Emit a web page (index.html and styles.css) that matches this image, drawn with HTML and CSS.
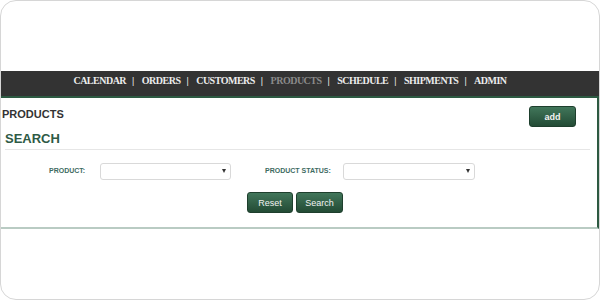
FILE: index.html
```html
<!DOCTYPE html>
<html>
	<head>
		<meta charset="UTF-8">
		<title>Products</title>
		<link rel="stylesheet" href="styles.css">
	</head>
	<body>
		<div class="frame">
			<div class="nav">
				<a href="javascript:;">CALENDAR</a><span class="sep">|</span><a href="javascript:;">ORDERS</a><span class="sep">|</span><a href="javascript:;">CUSTOMERS</a><span class="sep">|</span><a href="javascript:;" class="current">PRODUCTS</a><span class="sep">|</span><a href="javascript:;">SCHEDULE</a><span class="sep">|</span><a href="javascript:;">SHIPMENTS</a><span class="sep">|</span><a href="javascript:;">ADMIN</a>
			</div>
			<div class="panel">
				<div class="titlebar">
					<h1>PRODUCTS</h1>
					<button class="btn btn-add">add</button>
				</div>
				<h2 class="search-title">SEARCH</h2>
				<div class="search-row">
					<label class="lbl lbl-product">PRODUCT:</label>
					<div class="select sel-product"><select></select></div>
					<label class="lbl lbl-status">PRODUCT STATUS:</label>
					<div class="select sel-status"><select></select></div>
				</div>
				<div class="actions">
					<button class="btn btn-reset">Reset</button>
					<button class="btn btn-search">Search</button>
				</div>
			</div>
		</div>
	</body>
</html>
```
FILE: styles.css
```css
html, body {
	margin: 0;
	padding: 0;
	background: #fff;
}

.frame {
	box-sizing: border-box;
	width: 600px;
	height: 300px;
	border: 1px solid #d6d6d6;
	border-radius: 16px;
	padding-top: 70px;
	font-family: "Liberation Sans", Arial, sans-serif;
}

.nav {
	display: flex;
	justify-content: center;
	height: 25px;
	line-height: 20px;
	background: #333333;
	border-bottom: 2px solid #2d5a42;
	padding-right: 20px;
	font-family: "Liberation Serif", "Times New Roman", serif;
	font-weight: bold;
	font-size: 10px;
	letter-spacing: -0.5px;
	white-space: nowrap;
}

.nav a {
	color: #ececec;
	text-decoration: none;
}

.nav a.current {
	color: #8a8a8a;
}

.nav .sep {
	color: #ececec;
	margin: 0 8px 0 6px;
}

.panel {
	height: 129px;
	border-right: 2px solid #2d5a42;
	border-bottom: 2px solid #b9cbc3;
}

.titlebar {
	display: flex;
	justify-content: space-between;
	align-items: flex-start;
	padding: 8px 21px 0 1px;
}

.titlebar h1 {
	margin: 1px 0 0 0;
	font-size: 11px;
	line-height: 14px;
	color: #333;
}

.btn {
	font-family: "Liberation Sans", Arial, sans-serif;
	font-size: 9px;
	color: #f2f2f2;
	background: linear-gradient(#41765a, #234b35);
	border: 1px solid #1e3f2d;
	border-radius: 3px;
	padding: 0;
	cursor: pointer;
}

.btn-add {
	width: 47px;
	height: 21px;
	font-weight: bold;
}

.search-title {
	margin: 4px 7px 0 4px;
	padding-bottom: 3px;
	font-size: 13px;
	line-height: 15px;
	color: #2e5a45;
	border-bottom: 1px solid #e6e6e6;
}

.search-row {
	display: flex;
	align-items: center;
	margin-top: 12px;
	padding-left: 48px;
}

.lbl {
	font-size: 7px;
	font-weight: bold;
	color: #3e6b62;
	white-space: nowrap;
}

.lbl-product {
	width: 36px;
	margin-right: 15px;
}

.lbl-status {
	margin-left: 34px;
	width: 65px;
	margin-right: 13px;
}

.select {
	position: relative;
	height: 17px;
}

.sel-product {
	width: 131px;
}

.sel-status {
	width: 132px;
}

.select select {
	box-sizing: border-box;
	width: 100%;
	height: 100%;
	appearance: none;
	-webkit-appearance: none;
	background: #fff;
	border: 1px solid #d9d9d9;
	border-radius: 3px;
	margin: 0;
}

.select::after {
	content: "";
	position: absolute;
	right: 5px;
	top: 7px;
	border-left: 2.5px solid transparent;
	border-right: 2.5px solid transparent;
	border-top: 4px solid #333;
}

.actions {
	display: flex;
	justify-content: center;
	gap: 3px;
	margin-top: 13px;
	padding-right: 8px;
}

.btn-reset {
	width: 46px;
	height: 21px;
}

.btn-search {
	width: 47px;
	height: 21px;
}
```
